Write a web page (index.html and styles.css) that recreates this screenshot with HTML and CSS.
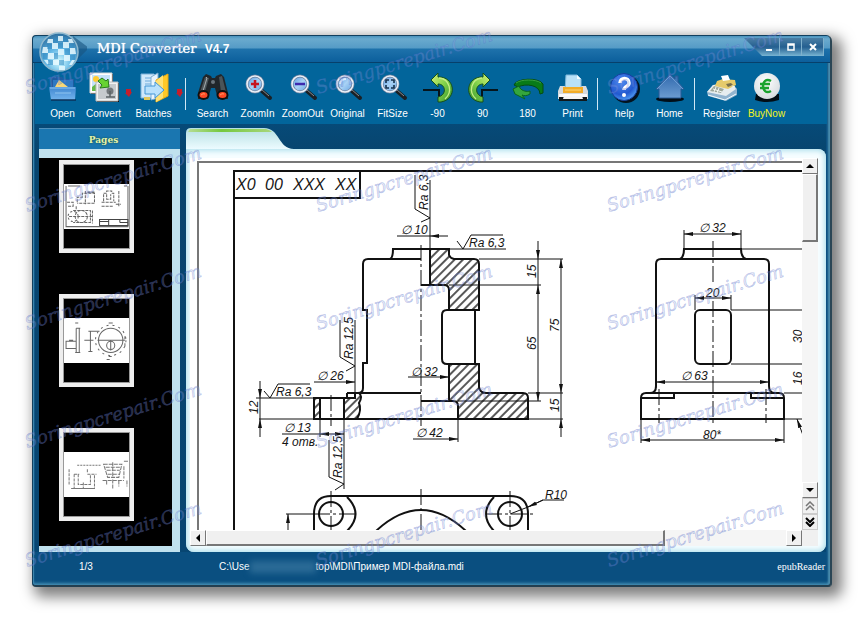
FILE: index.html
```html
<!DOCTYPE html>
<html lang="en">
<head>
<meta charset="utf-8">
<title>MDI Converter V4.7</title>
<link rel="stylesheet" href="styles.css">
</head>
<body>
<svg class="defs" width="0" height="0" aria-hidden="true">
  <defs>
    <linearGradient id="lensGlass" x1="0" y1="0" x2="1" y2="1"><stop offset="0" stop-color="#4f93dc"/><stop offset=".5" stop-color="#a9d2f5"/><stop offset="1" stop-color="#5f9fe0"/></linearGradient>
    <linearGradient id="folderBlue" x1="0" y1="0" x2="0" y2="1"><stop offset="0" stop-color="#3f86d0"/><stop offset="1" stop-color="#73b4ee"/></linearGradient>
    <linearGradient id="greenArrow" x1="0" y1="0" x2="1" y2="1"><stop offset="0" stop-color="#d9f27a"/><stop offset=".5" stop-color="#7fd04a"/><stop offset="1" stop-color="#35922b"/></linearGradient>
    <linearGradient id="houseBlue" x1="0" y1="0" x2="0" y2="1"><stop offset="0" stop-color="#3068ac"/><stop offset="1" stop-color="#6b9cd2"/></linearGradient>
    <radialGradient id="helpBlue" cx=".4" cy=".3" r=".8"><stop offset="0" stop-color="#4f8cf0"/><stop offset=".6" stop-color="#2259cf"/><stop offset="1" stop-color="#5fb4ff"/></radialGradient>
    <radialGradient id="coin" cx=".45" cy=".35" r=".7"><stop offset="0" stop-color="#ffffff"/><stop offset="1" stop-color="#d3d9dd"/></radialGradient>
    <radialGradient id="globe" cx=".5" cy=".75" r=".75"><stop offset="0" stop-color="#d7fbff"/><stop offset=".45" stop-color="#63b8e6"/><stop offset="1" stop-color="#2b6d9e"/></radialGradient>
    <symbol id="lens" viewBox="0 0 32 32">
      <path d="M20 19 28 26" stroke="#1b2025" stroke-width="4" stroke-linecap="round"/>
      <path d="M19 17 27 24" stroke="#858b90" stroke-width="1"/>
      <circle cx="13" cy="12" r="8" fill="url(#lensGlass)" stroke="#6b7f9c" stroke-width="3"/>
      <circle cx="13" cy="12" r="8" fill="none" stroke="#e9f0f8" stroke-width="1.600"/>
    </symbol>
    <symbol id="turn" viewBox="0 0 32 32">
      <path d="M1 18H17V30" fill="none" stroke="#06151c" stroke-width="2"/>
      <path d="M9 8 16 1V5C33 4 36 27 19 30H16V25C25 23 24 12 16 12V15Z" fill="url(#greenArrow)" stroke="#15501c" stroke-width="1"/>
      <path d="M17 6C28 7 31 20 23 27" fill="none" stroke="#c5ed86" stroke-width="1.300"/>
    </symbol>
    <pattern id="hatch" width="6" height="6" patternUnits="userSpaceOnUse" patternTransform="rotate(45)"><path d="M1 0V6" stroke="#111" stroke-width="1.400"/></pattern>
    <marker id="arrow" markerWidth="10" markerHeight="6" refX="9" refY="3" orient="auto-start-reverse" markerUnits="userSpaceOnUse"><path d="M0 1 9 3 0 5Z" fill="#111"/></marker>
  </defs>
</svg>

<main class="window">
  <header class="titlebar">
    <svg class="logo" width="48" height="42" viewBox="0 0 48 42" aria-hidden="true">
      <path d="M34 4 50 16 36 30Z" fill="#17537e" opacity=".6"/>
      <circle cx="20" cy="20" r="19" fill="url(#globe)" stroke="#8fb9cf" stroke-width="1.500"/>
      <g fill="#e6f9ff" opacity=".85"><path d="M9 7h5v4H8zM19 4h5v5h-5zM29 7h4l2 4h-5zM13 11h6v6h-6zM24 10h6v6h-6zM4 15h5v6H3zM9 21h6v6H8zM19 17h6v6h-6zM31 16h5l1 6h-6zM25 23h6v6h-6zM14 28h6v5h-6zM33 28h3l-3 5h-3zM20 34h6v4h-6zM5 28h4l2 4H8z"/></g>
      <g fill="#2c86c0" opacity=".5"><path d="M14 6h5v5h-5zM24 5h5v5h-5zM8 12h5v5H8zM19 11h5v5h-5zM30 12h5v4h-5zM4 21h5v6H4zM15 21h4v6h-4zM26 17h5v6h-5zM31 23h5v5h-5zM20 28h5v5h-5zM9 28h5v5H9z"/></g>
    </svg>
    <h1 class="title">MDI Converter <span class="version">V4.7</span></h1>
    <div class="window-controls">
      <button class="control" aria-label="Minimize"><svg width="10" height="10" viewBox="0 0 10 10"><path d="M2 8H8" stroke="#fff" stroke-width="2"/></svg></button>
      <button class="control" aria-label="Maximize"><svg width="10" height="10" viewBox="0 0 10 10"><path d="M2 2H8V8H2ZM2 3H8" fill="none" stroke="#fff" stroke-width="1.500"/></svg></button>
      <button class="control" aria-label="Close"><svg width="10" height="10" viewBox="0 0 10 10"><path d="M2 2 8 8M8 2 2 8" stroke="#fff" stroke-width="2"/></svg></button>
    </div>
  </header>

  <nav class="toolbar" aria-label="Tools">
    <button class="tool tool-file"><svg class="icon" viewBox="0 0 32 32">
      <path d="M4 5H15L17 7H27V17H4Z" fill="#1d5ca0"/><path d="M6 8H26V17H6Z" fill="#2e78c2"/><path d="M8 15 12 8 21 15Z" fill="#f8d777"/>
      <path d="M2 15H29L28 28H4Z" fill="url(#folderBlue)"/><path d="M3 16H28" stroke="#8ec7f5"/><path d="M8 21H24" stroke="#91c5f0"/><path d="M4 28H29" stroke="#0b3159" stroke-width="1.500"/></svg>Open</button>
    <button class="tool tool-file"><svg class="icon" viewBox="0 0 32 32">
      <path d="M3 2H25V22H3Z" fill="#111"/><path d="M2 1H24V21H2Z" fill="#fff" stroke="#d8d8d8"/><path d="M4 3H22V19H4Z" fill="#c6e2fa"/><circle cx="8" cy="7" r="3" fill="#ffcb32"/><path d="M4 19V15L9 11 14 18V19Z" fill="#65b84a"/>
      <path d="M9 11H31V30H9Z" fill="#111"/><path d="M8 10H30V29H8Z" fill="#f1f1f1" stroke="#bcbcbc"/><path d="M10 12H28V27H10Z" fill="#c6cacd"/><circle cx="22" cy="19" r="3.500" fill="#73787b"/><path d="M22 19V25M18 25H27" stroke="#5b6164" stroke-width="1.500"/>
      <path d="M10 9 14 6 18 9 20 7 21 15 12 16 14 13Z" fill="#67d331" stroke="#287b1d"/></svg>Convert</button>
    <button class="drop" aria-label="Convert options"><svg width="7" height="8" viewBox="0 0 7 8"><path d="M1 0H6V3H7L4 8 0 4H1Z" fill="#c41e2c"/></svg></button>
    <button class="tool tool-batch"><svg class="icon" viewBox="0 0 32 32">
      <path d="M3 2H16L20 6V26H3Z" fill="#cfe8fb" stroke="#7cb2da"/><path d="M7 6H14M7 9H16M7 12H15" stroke="#6daadb"/><path d="M13 5 20 1V26L13 28Z" fill="#e8f5ff" stroke="#7cafd4"/><path d="M18 8 30 2V24L18 30Z" fill="#ffc928" stroke="#e9aa12"/><path d="M18 9 25 3V26L18 30Z" fill="#ffe173"/><path d="M7 14H17V10L26 18 17 26V22H7Z" fill="#b9e1fc" stroke="#4296d5"/><path d="M6 25H12V28H6Z" fill="#e2c85c"/></svg>Batches</button>
    <button class="drop" aria-label="Batch options"><svg width="7" height="8" viewBox="0 0 7 8"><path d="M1 0H6V3H7L4 8 0 4H1Z" fill="#c41e2c"/></svg></button>
    <span class="divider"></span>
    <button class="tool"><svg class="icon" viewBox="0 0 32 32">
      <path d="M6 5 9 2 14 4 15 6H18L19 4 24 2 27 5 31 21V27H21L18 16H14L11 27H1V21Z" fill="#20262a"/><path d="M8 5 12 6 8 20H3ZM22 5 25 4 29 20H24Z" fill="#4b5458"/><path d="M9 5 10 6 6 19" stroke="#a5adaf" fill="none"/><circle cx="16" cy="10" r="2" fill="#69747b"/><ellipse cx="6.500" cy="23" rx="5" ry="4" fill="#ff4a25" stroke="#111" stroke-width="2"/><ellipse cx="25.500" cy="23" rx="5" ry="4" fill="#ff4a25" stroke="#111" stroke-width="2"/><path d="M4 23Q6 21 8 22M23 23Q25 21 27 22" stroke="#ff9a64" stroke-width="1" fill="none"/></svg>Search</button>
    <button class="tool"><svg class="icon" viewBox="0 0 32 32"><use href="#lens"/><path d="M13 8V16M9 12H17" stroke="#c51320" stroke-width="2.500"/></svg>ZoomIn</button>
    <button class="tool"><svg class="icon" viewBox="0 0 32 32"><use href="#lens"/><path d="M8 12H18" stroke="#3d2aae" stroke-width="2.500"/></svg>ZoomOut</button>
    <button class="tool"><svg class="icon" viewBox="0 0 32 32"><use href="#lens"/><path d="M8 12Q9 7 14 7" stroke="#d9ecff" stroke-width="2" fill="none"/></svg>Original</button>
    <button class="tool"><svg class="icon" viewBox="0 0 32 32"><use href="#lens"/><path d="M9 11V8H12M14 8H17V11M17 13V16H14M12 16H9V13" stroke="#16314c" stroke-width="1.600" fill="none"/></svg>FitSize</button>
    <button class="tool"><svg class="icon" viewBox="0 0 32 32"><use href="#turn"/></svg>-90</button>
    <button class="tool"><svg class="icon" viewBox="0 0 32 32"><use href="#turn" transform="translate(32 0) scale(-1 1)"/></svg>90</button>
    <button class="tool"><svg class="icon" viewBox="0 0 32 32"><path d="M2 13C4 6 27 5 31 12V21L28 22C28 13 14 11 6 15Z" fill="#087b18" stroke="#054c13"/><path d="M1 17 7 14 8 16C10 19 15 20 18 19V22C15 24 12 24 10 23L13 27 3 22Z" fill="#35a63d" stroke="#0a651b"/><path d="M4 11C9 7 24 7 29 11" fill="none" stroke="#38a042"/></svg>180</button>
    <button class="tool"><svg class="icon" viewBox="0 0 32 32"><path d="M3 14H29L31 19V27H1V19Z" fill="#d6dadd"/><path d="M2 24H30V29H2Z" fill="#11181b"/><path d="M2 22H30V25H2Z" fill="#fafafa"/><path d="M9 3H20L24 7V19H8Z" fill="#b9e1f8" stroke="#7fb8db"/><path d="M20 3V7H24" fill="#f4fcff"/><path d="M6 15H26V21H6Z" fill="#f2ac27"/><path d="M8 18H24" stroke="#ffd778" stroke-width="1"/><path d="M7 24H25L26 27H6Z" fill="#f5f5f5"/></svg>Print</button>
    <span class="divider"></span>
    <button class="tool"><svg class="icon" viewBox="0 0 32 32"><circle cx="17" cy="17" r="14" fill="#03131f"/><circle cx="15" cy="15" r="13.500" fill="url(#helpBlue)" stroke="#163f9d"/><path d="M11 11C11 5 20 5 20 11C20 15 15 14 15 18" fill="none" stroke="#fff" stroke-width="3.500"/><circle cx="15" cy="23" r="2" fill="#fff"/></svg>help</button>
    <button class="tool"><svg class="icon" viewBox="0 0 32 32"><ellipse cx="16" cy="27" rx="14" ry="3" fill="#010e18"/><path d="M16 2 21 7V4H24V10L30 17H27V26H5V17H2Z" fill="url(#houseBlue)" stroke="#285a96"/><path d="M3 17 16 4 29 17" fill="none" stroke="#6c9cd2"/></svg>Home</button>
    <span class="divider"></span>
    <button class="tool"><svg class="icon" viewBox="0 0 32 32"><path d="M1 20 7 13 26 11 31 17V23L20 29 2 24Z" fill="#92b4cf"/><path d="M1 20 7 13 26 11 30 17 20 24Z" fill="#e7edef"/><path d="M11 9 17 7 29 8 30 13 22 17 9 14Z" fill="#e5ca6b"/><path d="M15 4 22 3 24 8 17 9Z" fill="#fff"/><path d="M8 14 18 17 15 21 4 19Z" fill="#9fa99b"/><path d="M7 17 16 20M10 15 8 20M13 16 11 21M24 13 29 15" stroke="#f3f6f4"/><path d="M20 12 25 11 27 13 22 15Z" fill="#786f4c"/><path d="M2 23 19 28 30 22" stroke="#f2fcff" fill="none"/></svg>Register</button>
    <button class="tool tool-buy"><svg class="icon" viewBox="0 0 32 32"><path d="M5 22H28V28Q16 32 4 28Z" fill="#020d15"/><circle cx="16" cy="14" r="13" fill="url(#coin)"/><path d="M20 9C15 6 12 10 12 14C12 18 15 22 20 19M9 12H19M9 16H18" fill="none" stroke="#19a32e" stroke-width="2.500"/></svg>BuyNow</button>
  </nav>

  <div class="workspace">
    <aside class="sidebar">
      <h2 class="sidebar-title">Pages</h2>
      <div class="thumbs">
        <button class="thumb" aria-label="Page 1"><svg viewBox="0 0 66 45" fill="none" stroke="#666" stroke-width="1"><path d="M3 2V42H64V2M5 2H17M60 2H63"/><path d="M14 18V13H19V9H31V19H14M22 7V20M24 8H31M38 18H52M40 17V9H43V7H48V9H50V17M43 10V15H47V10M55 7V22M52 20H57M4 18H10V22H5M13 22V25M38 22H50" stroke-dasharray="3 1"/><circle cx="10" cy="32" r="5" stroke-dasharray="2 2"/><circle cx="18" cy="32" r="6" stroke-dasharray="3 1"/><path d="M6 32H30M10 26H27V38H10M29 26V39" stroke-dasharray="3 1"/><path d="M36 35H64V41H36ZM45 35V41M56 35V38M36 37H45M56 38H64" stroke="#444"/></svg></button>
        <button class="thumb" aria-label="Page 2"><svg viewBox="0 0 66 45" fill="none" stroke="#666" stroke-width="1"><path d="M3 23H13V30H3ZM13 10V34M16 10V34M13 10H17M12 34H17M6 22H10M12 5H15M27 13V33M21 22H30M25 13H36M25 33H29"/><circle cx="47" cy="22" r="12"/><circle cx="47" cy="22" r="15" stroke-dasharray="2 4"/><circle cx="47" cy="27" r="4"/><path d="M47 22V32M34 22H61M45 5H49M45 38H48M43 41H46M61 18V21M61 25V28"/></svg></button>
        <button class="thumb" aria-label="Page 3"><svg viewBox="0 0 66 45" fill="none" stroke="#777" stroke-width="1"><path d="M14 13H37" stroke-dasharray="2 1"/><path d="M6 17V32M11 22V36H31V22M15 22V32H27V22M11 22H16M24 22H33M8 36H31M20 30V36M24 17V21" stroke-dasharray="3 1"/><path d="M40 12H58L55 25H44ZM42 15H57M43 18H56M44 22H55M49 10V25M39 28H60M43 28V33M49 27V36M55 28V34M60 9H65M60 14V26M63 28V34" stroke-dasharray="4 1"/></svg></button>
      </div>
    </aside>

    <section class="viewer">
      <svg class="tab" width="112" height="21" viewBox="0 0 112 21" aria-hidden="true">
        <defs><linearGradient id="tabFill" x1="0" y1="0" x2="0" y2="1"><stop offset="0" stop-color="#b5dfe2"/><stop offset="1" stop-color="#ecfbff"/></linearGradient><linearGradient id="tabGreen"><stop offset="0" stop-color="#b5dc93"/><stop offset=".4" stop-color="#75c83e"/><stop offset="1" stop-color="#a8d67b"/></linearGradient></defs>
        <path d="M0 21V5Q0 0 5 0H78C94 0 92 21 108 21Z" fill="url(#tabFill)"/>
        <path d="M4 1H80Q84 2 86 4H2Z" fill="url(#tabGreen)"/>
      </svg>
      <div class="panel">
        <div class="page">
          <svg class="drawing" width="100%" height="372" role="img" aria-label="Engineering drawing">
            <g transform="translate(-190 -158)">
              <path class="sheet-edge" d="M3000 162H198V2000"/>
              <path class="bold-line" d="M3000 171H234V2000M234 198H360V171"/>
              <g class="heading"><text x="236" y="190">X0</text><text x="265" y="190">00</text><text x="293" y="190">XXX</text><text x="335" y="190">XX</text></g>

              <g class="hatched">
                <path d="M430 249H449V255Q450 258 454 259H474Q479 259 479 264V310H449V290Q449 285 444 285H430Z"/>
                <path d="M449 364H479V387Q480 393 486 393H523Q528 393 528 398V419H458V406Q458 401 453 401H449Z"/>
                <path d="M314 398H320V419H314Z"/>
                <path d="M344 398H355V393H359Q363 396 359 403Q362 410 357 419H344Z"/>
              </g>
              <g class="bold-line">
                <path d="M390 259Q393 258 393 249H449M421 259H368Q363 259 363 264V310H367V363H363V388Q363 393 358 393M347 393H421M347 393V398H355V393M314 398H347M314 398V419H528M421 401H453M421 285H446"/>
                <path d="M475 310H447Q442 310 442 315V359Q442 364 447 364H475ZM475 310V364"/>
                <path d="M528 530V514Q528 496 510 496H331Q314 496 314 514V530M347 497Q364 514 347 531M494 497Q478 514 494 531M376 531Q421 489 466 531"/>
                <circle cx="331" cy="514" r="12"/><circle cx="510" cy="514" r="12"/>
                <path d="M680 259Q684 257 684 249H741Q741 257 746 259M650 393Q656 393 656 386V264Q656 259 661 259H764Q769 259 769 264V386Q769 393 775 393M641 419V398Q641 393 646 393H779Q784 393 784 398V419ZM641 398H674V393M784 398H751V393"/>
                <rect x="695" y="310" width="36" height="54" rx="5"/>
              </g>
              <g class="thin-line">
                <path d="M430 180V249M421 249H506M479 259H563M449 285H541M528 393H563M458 401H541M528 419H563M355 320V398M256 398H314M259 419H314M320 419V437M344 419V489M458 419V442M684 230V249M741 230V249M695 295V310M731 295V310M641 419V443M784 419V443M656 380V388M741 249H3000M731 310H3000M731 364H3000M784 393H3000M784 419H3000M286 514H314M543 500H564M528 507 543 500M510 514 528 507"/>
                <path d="M415 175V209L430 218 421 222M457 241 463 249 471 235H503M264 391 270 398 278 384H310M340 320V357L355 366 346 371M329 440V477L344 484 335 490"/>
                <path marker-end="url(#arrow)" d="M538 241V259"/><path marker-start="url(#arrow)" marker-end="url(#arrow)" d="M538 285V401"/><path d="M538 259V285"/>
                <path marker-start="url(#arrow)" marker-end="url(#arrow)" d="M561 259V393"/><path marker-end="url(#arrow)" d="M561 437V419"/><path d="M561 393V419M397 236H430M282 434H320M260 398V419"/>
                <path marker-end="url(#arrow)" d="M448 236H430"/><path marker-end="url(#arrow)" d="M408 377H449"/><path marker-end="url(#arrow)" d="M413 439H458"/><path marker-end="url(#arrow)" d="M314 382H355"/>
                <path marker-end="url(#arrow)" d="M260 381V398"/><path marker-end="url(#arrow)" d="M260 437V419"/>
                <path marker-start="url(#arrow)" marker-end="url(#arrow)" d="M320 434H344"/><path marker-end="url(#arrow)" d="M288 534V514"/><path marker-end="url(#arrow)" d="M543 500 528 507"/>
                <path marker-start="url(#arrow)" marker-end="url(#arrow)" d="M684 234H741"/><path marker-start="url(#arrow)" marker-end="url(#arrow)" d="M695 298H731"/><path marker-start="url(#arrow)" marker-end="url(#arrow)" d="M656 382H769"/><path marker-start="url(#arrow)" marker-end="url(#arrow)" d="M641 440H784"/><path marker-end="url(#arrow)" d="M804 438 797 419"/>
              </g>
              <path class="axis" d="M421 245V426M331 395V426M713 241V284M713 301V423M659 389V423M766 389V423M421 489V540M331 491V540M510 491V540M314 514H358M486 514H533"/>
              <g class="dims">
                <text x="401" y="234">∅ 10</text><text x="469" y="247">Ra 6,3</text><text x="411" y="376">∅ 32</text><text x="416" y="437">∅ 42</text><text x="317" y="380">∅ 26</text><text x="276" y="396">Ra 6,3</text><text x="284" y="432">∅ 13</text><text x="282" y="446">4 отв.</text><text x="545" y="499">R10</text>
                <text x="699" y="232">∅ 32</text><text x="706" y="297">20</text><text x="681" y="380">∅ 63</text><text x="703" y="439">80*</text>
                <text transform="translate(428 210) rotate(-90)">Ra 6,3</text><text transform="translate(353 359) rotate(-90)">Ra 12,5</text><text transform="translate(342 478) rotate(-90)">Ra 12,5</text><text transform="translate(258 414) rotate(-90)">12</text>
                <text transform="translate(536 278) rotate(-90)">15</text><text transform="translate(536 350) rotate(-90)">65</text><text transform="translate(559 332) rotate(-90)">75</text><text transform="translate(559 412) rotate(-90)">15</text><text transform="translate(802 343) rotate(-90)">30</text><text transform="translate(802 385) rotate(-90)">16</text>
              </g>
            </g>
          </svg>
        </div>
        <div class="scroll scroll-y">
          <button class="scroll-button" aria-label="Scroll up"><svg width="8" height="4" viewBox="0 0 8 4"><path d="M4 0 8 4H0Z"/></svg></button>
          <div class="scroll-thumb thumb-y"></div>
          <div class="scroll-track"></div>
          <button class="scroll-button" aria-label="Scroll down"><svg width="8" height="4" viewBox="0 0 8 4"><path d="M0 0H8L4 4Z"/></svg></button>
          <button class="page-button" aria-label="Previous page"><svg width="10" height="10" viewBox="0 0 10 10"><path d="M1 5 5 1 9 5M1 9 5 5 9 9" fill="none" stroke="#777" stroke-width="1.500"/></svg></button>
          <button class="page-button" aria-label="Next page"><svg width="10" height="10" viewBox="0 0 10 10"><path d="M1 1 5 5 9 1M1 5 5 9 9 5" fill="none" stroke="#000" stroke-width="2"/></svg></button>
        </div>
        <div class="scroll scroll-x">
          <button class="scroll-button" aria-label="Scroll left"><svg width="4" height="8" viewBox="0 0 4 8"><path d="M4 0V8L0 4Z"/></svg></button>
          <div class="scroll-thumb thumb-x"></div>
          <div class="scroll-track"></div>
          <button class="scroll-button" aria-label="Scroll right"><svg width="4" height="8" viewBox="0 0 4 8"><path d="M0 0 4 4 0 8Z"/></svg></button>
        </div>
        <div class="scroll-corner"></div>
      </div>
    </section>
  </div>

  <footer class="statusbar">
    <span class="page-count">1/3</span>
    <span class="path">C:\Use<span class="redacted"></span>top\MDI\Пример MDI-файла.mdi</span>
    <span class="brand">epubReader</span>
  </footer>
</main>

<svg class="watermarks" width="864" height="620" aria-hidden="true">
  <g><text transform="translate(27 94) rotate(-17)">Soringpcrepair.Com</text><text transform="translate(27 212) rotate(-17)">Soringpcrepair.Com</text><text transform="translate(27 330) rotate(-17)">Soringpcrepair.Com</text><text transform="translate(27 448) rotate(-17)">Soringpcrepair.Com</text><text transform="translate(27 567) rotate(-17)">Soringpcrepair.Com</text></g>
  <g><text transform="translate(318 94) rotate(-17)">Soringpcrepair.Com</text><text transform="translate(318 212) rotate(-17)">Soringpcrepair.Com</text><text transform="translate(318 330) rotate(-17)">Soringpcrepair.Com</text><text transform="translate(318 448) rotate(-17)">Soringpcrepair.Com</text><text transform="translate(318 567) rotate(-17)">Soringpcrepair.Com</text></g>
  <g><text transform="translate(609 94) rotate(-17)">Soringpcrepair.Com</text><text transform="translate(609 212) rotate(-17)">Soringpcrepair.Com</text><text transform="translate(609 330) rotate(-17)">Soringpcrepair.Com</text><text transform="translate(609 448) rotate(-17)">Soringpcrepair.Com</text><text transform="translate(609 567) rotate(-17)">Soringpcrepair.Com</text></g>
</svg>
</body>
</html>
```
FILE: styles.css
```css
* {
  box-sizing: border-box;
}

body {
  position: relative;
  margin: 0;
  min-height: 100vh;
  padding: 35px 32px 33px;
  background: #fff;
  font-family: "Liberation Sans", Arial, sans-serif;
  font-size: 10px;
  line-height: 12px;
}

button {
  margin: 0;
  padding: 0;
  border: 0;
  background: none;
  color: inherit;
  font: inherit;
}

.defs {
  position: absolute;
}

.window {
  display: flex;
  flex-direction: column;
  min-height: calc(100vh - 68px);
  border: 1px solid #12405f;
  border-bottom: 2px solid #233f50;
  border-right: 2px solid #2b4655;
  border-radius: 4px 6px 4px 4px;
  background: #0a4f80;
  box-shadow: inset 1px 0 #3c85ad, inset -2px 0 2px #4b8dae, inset 0 -2px 3px #3f88ae, 6px 6px 14px 4px rgba(0, 0, 0, .5);
  color: #fff;
}

.titlebar {
  display: flex;
  align-items: flex-start;
  height: 27px;
  padding: 0 6px;
  border-radius: 4px 4px 0 0;
  border-bottom: 1px solid #07406b;
  background: linear-gradient(#4a93bd 0, #6aaace 3px, #559bc6 12px, #1e72ab 13px, #0c5f9c 100%);
}

.logo {
  position: relative;
  z-index: 1;
  flex: none;
  margin-top: -4px;
}

.title {
  flex: 1;
  margin: 4px 0 0 10px;
  font-family: "DejaVu Serif", serif;
  font-size: 13px;
  font-weight: 400;
  line-height: 18px;
  text-shadow: 0 0 1px #fff;
}

.version {
  margin-left: 4px;
  font-family: "Liberation Sans", Arial, sans-serif;
  font-size: 12px;
  font-weight: 700;
  text-shadow: none;
}

.window-controls {
  display: flex;
  height: 18px;
  margin-top: 2px;
  padding-left: 14px;
  background: linear-gradient(#4b7fa5, #245f90 50%, #79b5d3);
  clip-path: polygon(0 0, 100% 0, 100% 100%, 18px 100%);
}

.control {
  display: grid;
  place-items: center;
  width: 22px;
  border-right: 1px solid #7fb0cc;
}

.toolbar {
  display: flex;
  height: 61px;
  margin: 0 3px 0 2px;
  padding: 9px 0 0 7px;
  background: #02659b;
}

.tool {
  display: flex;
  flex-direction: column;
  align-items: center;
  gap: 4px;
  width: 45px;
  height: 48px;
  white-space: nowrap;
}

.tool-file {
  width: 41px;
}

.tool-batch {
  width: 43px;
}

.tool-buy {
  color: #f5f51c;
}

.icon {
  width: 32px;
  height: 32px;
  flex: none;
}

.drop {
  width: 8px;
  height: 32px;
  padding-top: 12px;
}

.divider {
  width: 2px;
  height: 32px;
  margin: 6px 3px 0 2px;
  border-left: 1px solid #cfe7f5;
}

.workspace {
  display: flex;
  flex: 1;
  gap: 6px;
  margin: 0 4px 0 2px;
  padding: 4px 0 0 4px;
  background: linear-gradient(#064a78, #08446d 32px, #074672);
}

.sidebar {
  display: flex;
  flex-direction: column;
  flex: none;
  width: 141px;
  background: #c0e1ee;
}

.sidebar-title {
  height: 21px;
  margin: 0 0 9px;
  padding-right: 12px;
  border-top: 1px solid #5191bb;
  background: #1a76b0;
  color: #e4f2ae;
  font-family: "DejaVu Serif", serif;
  font-size: 9px;
  font-weight: 700;
  line-height: 22px;
  text-align: center;
  text-shadow: 0 0 2px #14502a;
}

.thumbs {
  display: flex;
  flex: 1;
  flex-direction: column;
  align-items: flex-start;
  gap: 41px;
  margin: 0 8px 6px 0;
  padding: 2px 20px;
  background: #000;
}

.thumb {
  display: grid;
  align-items: center;
  width: 75px;
  height: 93px;
  border: 4px solid #eee;
  outline: 1px solid #999;
  outline-offset: -5px;
  background: #000;
}

.thumb svg {
  width: 100%;
  background: #fff;
}

.viewer {
  display: flex;
  flex: 1;
  flex-direction: column;
  min-width: 0;
}

.tab {
  display: block;
}

.panel {
  display: grid;
  flex: 1;
  grid-template-columns: minmax(0, 1fr) 16px;
  grid-template-rows: 1fr 16px;
  padding: 9px 8px 6px 4px;
  border-radius: 0 8px 8px 8px;
  background: #f5fdff;
  box-shadow: inset 0 0 5px 2px #b4e2ee;
}

.page {
  overflow: hidden;
  background: #fff;
}

.drawing {
  display: block;
}

.drawing text {
  fill: #151515;
  font-family: "Liberation Sans", Arial, sans-serif;
  font-style: italic;
}

.heading {
  font-size: 16px;
}

.dims {
  font-size: 12px;
}

.bold-line,
.thin-line,
.axis,
.sheet-edge {
  fill: none;
  stroke: #111;
}

.bold-line {
  stroke-width: 2;
}

.thin-line,
.axis {
  stroke-width: 1;
}

.axis {
  stroke-dasharray: 16 3 3 3;
}

.sheet-edge {
  stroke: #777;
  stroke-width: 2;
}

.hatched {
  fill: url(#hatch);
  stroke: #111;
  stroke-width: 2;
}

.scroll {
  display: flex;
  background: #f5f5f5;
}

.scroll-y {
  flex-direction: column;
}

.scroll-button,
.page-button {
  display: grid;
  flex: none;
  place-items: center;
  width: 16px;
  height: 16px;
  border: 1px solid #fff;
  border-right-color: #777;
  border-bottom-color: #777;
  background: #f0f0f0;
}

.page-button {
  border-color: #ccc;
}

.scroll-thumb {
  border: 1px solid #fff;
  border-right: 2px solid #777;
  border-bottom: 2px solid #777;
  background: #f0f0f0;
}

.thumb-y {
  height: 68px;
}

.thumb-x {
  width: 75%;
}

.scroll-track {
  flex: 1;
}

.scroll-corner {
  background: #f0f0f0;
}

.statusbar {
  display: flex;
  align-items: center;
  height: 33px;
  padding: 0 5px 4px 46px;
}

.page-count {
  width: 140px;
}

.path {
  display: flex;
  flex: 1;
  white-space: nowrap;
}

.redacted {
  width: 66px;
  height: 12px;
  background: #2b6b96;
  filter: blur(3px);
}

.brand {
  font-family: "Liberation Serif", serif;
}

.watermarks {
  position: absolute;
  top: 0;
  left: 0;
  pointer-events: none;
}

.watermarks text {
  fill: rgba(160, 178, 232, .25);
  stroke: rgba(75, 100, 195, .38);
  stroke-width: .6;
  font-family: "DejaVu Serif", serif;
  font-size: 18px;
  font-style: italic;
}
```
